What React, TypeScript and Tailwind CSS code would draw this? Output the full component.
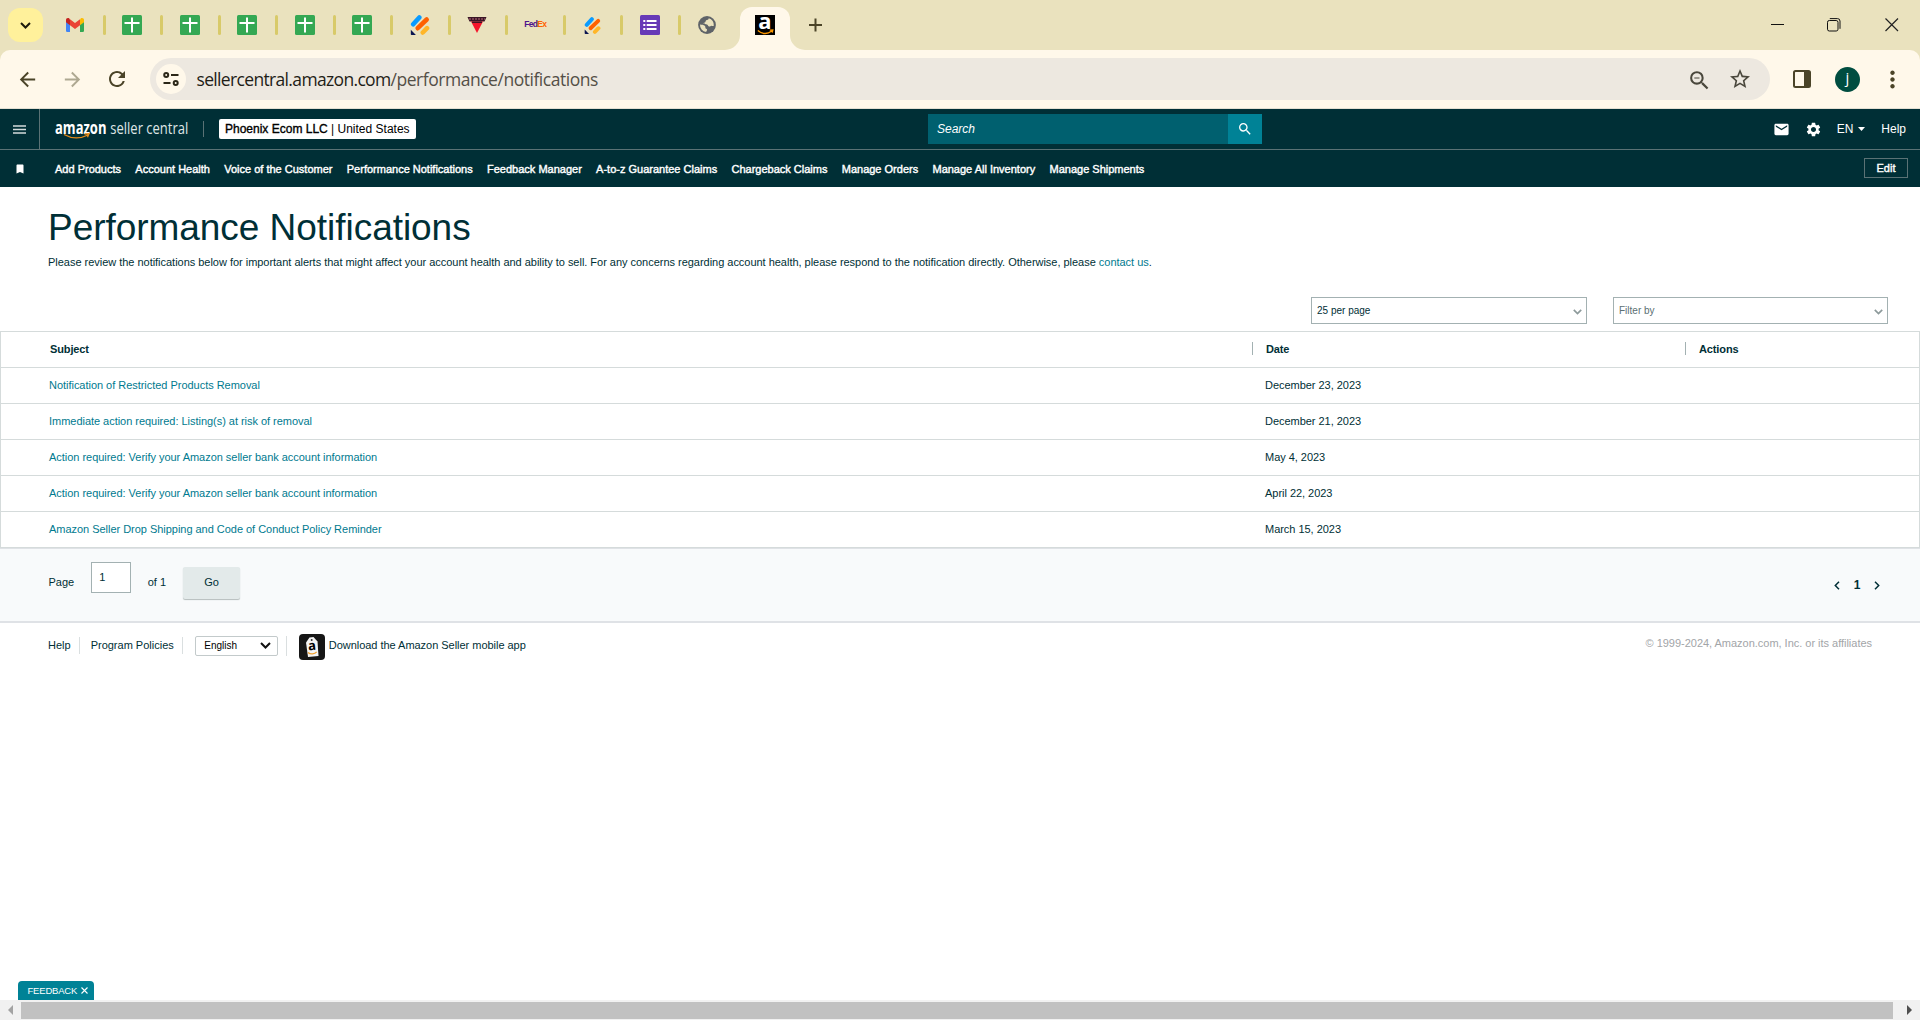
import React from "react";
import {
  MdArrowBack,
  MdArrowForward,
  MdBookmark,
  MdMoreVert,
  MdRefresh,
  MdSearch,
  MdSettings,
  MdStarBorder,
  MdZoomOut,
  MdMail,
} from "react-icons/md";

function GmailIcon() {
  return (
    <svg width="18" height="14" viewBox="0 0 18 14">
      <path d="M0 2.2V12.700a1.300 1.300 0 0 0 1.300 1.300H4V6z" fill="#4285f4" />
      <path d="M18 2.2V12.700a1.300 1.300 0 0 1-1.300 1.300H14V6z" fill="#34a853" />
      <path d="M0 2v2.300L4 7.300V1.500L3.300.6C2-.5 0 .3 0 2z" fill="#c5221f" />
      <path d="M18 2v2.300L14 7.300V1.500L14.700.6C16-.5 18 .3 18 2z" fill="#fbbc04" />
      <path d="M4 1.300L9 5l5-3.700v6L9 11 4 7.300z" fill="#ea4335" />
    </svg>
  );
}

function SheetsIcon() {
  return (
    <svg width="20" height="20" viewBox="0 0 20 20">
      <rect width="20" height="20" rx="1.500" fill="#34a853" />
      <path d="M2.500 8h15M10 2.500v15" stroke="#fff" strokeWidth="2" />
    </svg>
  );
}

function JotformIcon({ size }: { size: number }) {
  return (
    <svg width={size} height={size} viewBox="0 0 20 20">
      <g strokeLinecap="round" strokeWidth="4.600">
        <path d="M3.200 9.300L9.300 2.500" stroke="#0a9bff" />
        <path d="M7.700 13.200L16.700 4.500" stroke="#ff6100" />
        <path d="M12.800 17.500L17 13.200" stroke="#ffb629" />
      </g>
      <path d="M.8 14.800v4.400c0 .5.300.8.800.8h4.300z" fill="#0a1551" />
    </svg>
  );
}

function TriangleIcon() {
  return (
    <svg width="20" height="18" viewBox="0 0 20 18">
      <path d="M.5 1h19l-2 4.500h-15z" fill="#3a1626" />
      <path d="M2 3h16" stroke="#b9687a" strokeWidth="1" strokeDasharray="2 1" />
      <path d="M4 5.500h12L10 17z" fill="#f5152b" />
      <path d="M5 6.200h10" stroke="#3a1626" strokeWidth="1.500" />
    </svg>
  );
}

function FormsIcon() {
  return (
    <svg width="20" height="20" viewBox="0 0 20 20">
      <rect width="20" height="20" rx="1.500" fill="#673ab7" />
      <path d="M6.700 6h9.800M6.700 10h9.800M6.700 14h9.800" stroke="#fff" strokeWidth="2" />
      <path d="M3.300 6h2M3.300 10h2M3.300 14h2" stroke="#fff" strokeWidth="2" />
    </svg>
  );
}

function GlobeIcon() {
  return (
    <svg width="18" height="18" viewBox="0 0 18 18">
      <circle cx="9" cy="9" r="8.900" fill="#5f6368" />
      <path
        d="M10.800 2.200c-.2 1.500-1.600 1.500-2.600 2.100-.8.500-.3 1.700-1.300 2.300-.6.400-1.300.2-1.300.9 0 .8 2.300.4 3.400.9 1.300.6.900 1.900 2.200 2.100 1 .2 1.200-.8 2.200-.8.900 0 1.600.6 2.400 0A7 7 0 0 0 10.800 2.200z"
        fill="#eae2be"
      />
      <path
        d="M2 8.500c1.600.2 3.700.3 4.800 1.300 1 .9.200 1.800.9 2.600.6.600 1.600.5 1.400 1.600-.1.700-.7 1-.9 1.900A7 7 0 0 1 2 8.500z"
        fill="#eae2be"
      />
    </svg>
  );
}

function AmazonTabIcon() {
  return (
    <span className="relative flex h-5 w-5 justify-center bg-black">
      <span className="-mt-[5px] font-['Open_Sans',sans-serif] text-[22px] leading-[20px] font-bold text-white">a</span>
      <svg className="absolute bottom-0 left-[2px]" width="17" height="6" viewBox="0 0 17 6">
        <path d="M.8 1.500c4.500 3.700 9.800 3.700 14 .6M12.800 1.200l3-.2-.6 2.600" fill="none" stroke="#ff9900" strokeWidth="1.300" />
      </svg>
    </span>
  );
}

const tabs = [
  <GmailIcon />,
  <SheetsIcon />,
  <SheetsIcon />,
  <SheetsIcon />,
  <SheetsIcon />,
  <SheetsIcon />,
  <JotformIcon size={20} />,
  <TriangleIcon />,
  <span className="-mt-[2px] ml-px font-['Liberation_Sans',sans-serif] text-[8.500px] leading-none font-bold tracking-[-0.700px] text-[#4d148c]">
    Fed<span className="text-[#ff6200]">Ex</span>
  </span>,
  <JotformIcon size={17} />,
  <FormsIcon />,
  <GlobeIcon />,
];

function TabStrip() {
  return (
    <div className="flex h-[50px] bg-[#eae2be] pl-2">
      <button className="mt-2 flex h-[34px] w-[35px] items-center justify-center rounded-[12px] bg-[#fff19b]">
        <svg width="11" height="7" viewBox="0 0 11 7">
          <path d="M1 1l4.500 4.500L10 1" fill="none" stroke="#1d1b0c" strokeWidth="2" />
        </svg>
      </button>
      <div className="ml-[3px] flex">
        {tabs.map((icon, i) => (
          <div key={i} className="relative flex h-[50px] w-[57.500px] items-center justify-center">
            {icon}
            {i < 11 && <span className="absolute top-[15px] -right-[2px] h-[20px] w-[3px] rounded-full bg-[#d8ca69]" />}
          </div>
        ))}
      </div>
      <div className="relative mt-[7px] ml-[4px] flex h-[43px] w-[50px] justify-center rounded-t-[12px] bg-[#fff8ea] pt-2">
        <svg className="absolute bottom-0 -left-[15px]" width="15" height="15">
          <path d="M15 0v15H0A15 15 0 0 0 15 0z" fill="#fff8ea" />
        </svg>
        <AmazonTabIcon />
        <svg className="absolute -right-[15px] bottom-0" width="15" height="15">
          <path d="M0 0v15h15A15 15 0 0 1 0 0z" fill="#fff8ea" />
        </svg>
      </div>
      <svg className="mt-[18px] ml-[19px]" width="13" height="14">
        <path d="M6.500.5v13M0 7h13" stroke="#4b4428" strokeWidth="2" />
      </svg>
      <div className="mt-[18px] mr-[21px] ml-auto flex gap-[44px]">
        <svg width="13" height="14" className="translate-x-px">
          <path d="M0 6.500h13" stroke="#111" />
        </svg>
        <svg width="14" height="14" fill="none" stroke="#111">
          <rect x=".5" y="2.500" width="10.500" height="10.500" rx="1.800" />
          <path d="M2.800.6h7.700a2.500 2.500 0 0 1 2.500 2.500v7.700" />
        </svg>
        <svg width="14" height="14">
          <path d="M.5.5l12.500 12.500M13 .5L.5 13" stroke="#222" strokeWidth="1.200" />
        </svg>
      </div>
    </div>
  );
}

function Toolbar() {
  return (
    <div className="bg-[#eae2be]">
      <div className="flex h-[59px] items-center rounded-t-[10px] border-b border-[#e3dfd2] bg-[#fff8ea] pl-[16px] text-[#4b4428]">
        <MdArrowBack size={23} />
        <MdArrowForward size={23} className="ml-[22px] text-[#aea891]" />
        <MdRefresh size={24} className="ml-[21px] -mt-px" />
        <div className="ml-[21px] flex h-[42px] w-[1620px] items-center rounded-full bg-[#ede8e0] pl-[6px] font-['Open_Sans',sans-serif] text-[17.500px]">
          <span className="flex h-[30px] w-[30px] items-center justify-center rounded-full bg-[#fff8ea]">
            <svg width="16" height="14" viewBox="0 0 16 14" fill="none" stroke="#2b2718" strokeWidth="2">
              <circle cx="3.200" cy="3" r="2" />
              <path d="M8 3h7.500M.5 11h7" />
              <circle cx="12.700" cy="11" r="2" />
            </svg>
          </span>
          <span className="ml-[10.500px] tracking-[-0.660px] text-[#1f1d17]">sellercentral.amazon.com</span>
          <span className="tracking-[-0.470px] text-[#544f47]">/performance/notifications</span>
          <MdZoomOut size={25} className="mt-[2px] ml-auto text-[#4a473c]" />
          <MdStarBorder size={24} className="mr-[18px] ml-[16px] text-[#4a473c]" />
        </div>
        <svg className="ml-[23px]" width="18" height="18">
          <rect x="1" y="1" width="16" height="16" rx="1.500" fill="none" stroke="#4b4428" strokeWidth="2" />
          <rect x="11" y="1" width="6" height="16" fill="#4b4428" />
        </svg>
        <span className="ml-[24px] flex h-[25px] w-[25px] items-center justify-center rounded-full bg-[#004d40] pb-[3px] font-['Open_Sans',sans-serif] text-[15px] text-white">
          j
        </span>
        <MdMoreVert size={27} className="ml-[19px]" />
      </div>
    </div>
  );
}

const navLinks = [
  "Add Products",
  "Account Health",
  "Voice of the Customer",
  "Performance Notifications",
  "Feedback Manager",
  "A-to-z Guarantee Claims",
  "Chargeback Claims",
  "Manage Orders",
  "Manage All Inventory",
  "Manage Shipments",
];

function SiteHeader() {
  return (
    <header className="bg-[#002f36] text-white">
      <div className="flex h-[41px] items-center border-b border-[#5a7275]">
        <div className="flex h-[40px] w-[40px] items-center border-r border-[#5a7275] pl-[13px]">
          <svg width="13" height="9">
            <path d="M0 1h13M0 4.500h13M0 8h13" stroke="#d3dcdc" strokeWidth="1.700" />
          </svg>
        </div>
        <div className="relative ml-[15px] flex h-10 w-[134px] items-center">
          <span className="flex origin-left scale-x-[0.765] gap-[5px] pb-[4px] font-['Open_Sans',sans-serif] text-[17px] leading-none whitespace-nowrap">
            <span className="font-bold">amazon</span>
            <span className="text-[#dfe6e6]">seller central</span>
          </span>
          <svg className="absolute top-[24px] left-[8px]" width="28" height="7" viewBox="0 0 28 7">
            <path d="M1 1.500c8 4.500 16 4.500 24 .5M21.500 1l4.500-.3-1.500 3.600" fill="none" stroke="#e88b1a" strokeWidth="1.300" />
          </svg>
        </div>
        <span className="ml-[14px] h-4 w-px bg-[#5a7275]" />
        <div className="ml-[15px] flex h-5 w-[197px] items-center rounded-[2px] bg-white pl-[6px] text-[12px] whitespace-pre text-black">
          <span className="[-webkit-text-stroke:0.350px_black]">Phoenix Ecom LLC</span>
          <span> | United States</span>
        </div>
        <div className="ml-[512px] flex h-[30px]">
          <div className="flex w-[300px] items-center bg-[#00606f] pt-px pl-[9px] text-[12px] italic">Search</div>
          <div className="flex w-[34px] items-center justify-center bg-[#008296]">
            <MdSearch size={16} />
          </div>
        </div>
        <div className="mr-[14px] ml-auto flex items-center text-[12px]">
          <MdMail size={17} />
          <MdSettings size={17} className="ml-[15px]" />
          <span className="ml-[15px]">EN</span>
          <svg className="ml-[5px]" width="7" height="4">
            <path d="M0 0h7L3.500 4z" fill="#fff" />
          </svg>
          <span className="ml-[16px]">Help</span>
        </div>
      </div>
      <nav className="flex h-[37px] items-center text-[11px]">
        <MdBookmark size={12} className="ml-[14px]" />
        <div className="ml-[29px] flex gap-[14.300px] pt-[2px]">
          {navLinks.map((l) => (
            <span key={l} className="[-webkit-text-stroke:0.400px_white]">
              {l}
            </span>
          ))}
        </div>
        <span className="mr-[12px] mb-px ml-auto flex h-5 w-11 items-center justify-center border border-[#5a7275] [-webkit-text-stroke:0.400px_white]">
          Edit
        </span>
      </nav>
    </header>
  );
}

function Select({ label, className }: { label: string; className: string }) {
  return (
    <div className={"flex h-[27px] items-center justify-between border border-[#a3b1b2] bg-white pr-[4px] pl-[5px] text-[10px] " + className}>
      <span className="pb-px">{label}</span>
      <svg className="mt-[3px]" width="9" height="6">
        <path d="M.8.8l3.700 3.700L8.200.8" fill="none" stroke="#8d9a9b" strokeWidth="1.700" />
      </svg>
    </div>
  );
}

const rows = [
  ["Notification of Restricted Products Removal", "December 23, 2023"],
  ["Immediate action required: Listing(s) at risk of removal", "December 21, 2023"],
  ["Action required: Verify your Amazon seller bank account information", "May 4, 2023"],
  ["Action required: Verify your Amazon seller bank account information", "April 22, 2023"],
  ["Amazon Seller Drop Shipping and Code of Conduct Policy Reminder", "March 15, 2023"],
];

function NotificationsTable() {
  return (
    <div className="border-x border-t border-[#d5dbdb]">
      <div className="grid h-[36px] grid-cols-[1251px_433px_1fr] items-center border-b border-[#d5dbdb] font-bold">
        <span className="pl-[49px] tracking-[-0.120px]">Subject</span>
        <span className="relative pl-[14px] tracking-[-0.120px]">
          <span className="absolute -top-px left-0 h-[13px] w-px bg-[#a3b1b2]" />
          Date
        </span>
        <span className="relative pl-[14px] tracking-[-0.120px]">
          <span className="absolute -top-px left-0 h-[13px] w-px bg-[#a3b1b2]" />
          Actions
        </span>
      </div>
      {rows.map(([subject, date], i) => (
        <div key={i} className="grid h-[36px] grid-cols-[1251px_433px_1fr] items-center border-b border-[#d5dbdb]">
          <span className="pl-[48px] tracking-[-0.030px] text-[#007a8f]">{subject}</span>
          <span className="pl-[13px] tracking-[-0.030px]">{date}</span>
        </div>
      ))}
    </div>
  );
}

function Pager() {
  return (
    <div className="flex h-[75px] border-t border-b-2 border-[#dfe2e6] bg-[#f8fafb] pl-[48.500px]">
      <span className="mt-[27px]">Page</span>
      <span className="mt-[13px] ml-[17px] flex h-[31px] w-[40px] items-center border border-[#a3b1b2] bg-white pl-[7px]">1</span>
      <span className="mt-[27px] ml-[16.500px]">of 1</span>
      <span className="mt-[18px] ml-[17px] flex h-[32px] w-[57px] items-center justify-center rounded-[2px] bg-[#e3eaea] pb-px shadow-[0_1px_1px_#b4bcbc]">
        Go
      </span>
      <div className="mt-[30px] mr-[40.500px] ml-auto flex h-[13px] items-center font-bold">
        <svg width="6" height="9">
          <path d="M5 .8L1.300 4.500 5 8.200" fill="none" stroke="#002f36" strokeWidth="1.500" />
        </svg>
        <span className="ml-[14px] text-[12px]">1</span>
        <svg className="ml-[13px]" width="6" height="9">
          <path d="M1 .8l3.700 3.700L1 8.200" fill="none" stroke="#002f36" strokeWidth="1.500" />
        </svg>
      </div>
    </div>
  );
}

function Footer() {
  return (
    <footer className="flex h-[48px] items-center pb-[3px] pl-[48px]">
      <span>Help</span>
      <span className="ml-[8px] h-[17px] w-px bg-[#dadfe0]" />
      <span className="ml-[11px]">Program Policies</span>
      <span className="ml-[8px] h-[17px] w-px bg-[#dadfe0]" />
      <span className="ml-[12px] flex h-[20px] w-[83px] items-center justify-between rounded-[2px] border border-[#c3cacb] pr-[6px] pl-[8.500px] text-[10px] text-black">
        English
        <svg width="11" height="7">
          <path d="M1 1l4.500 4.500L10 1" fill="none" stroke="#111" strokeWidth="2" />
        </svg>
      </span>
      <span className="ml-[8px] h-[20px] w-px bg-[#dadfe0]" />
      <span className="relative top-px ml-[12px] flex h-[26px] w-[26px] items-center justify-center rounded-[4px] bg-[#161616]">
        <svg width="16" height="22" viewBox="0 0 16 22">
          <path d="M5.500 1.500L9.500 1l4 4.500 1 14.500-10.500 1L2 6.500z" fill="#f4f4f4" />
          <circle cx="7.700" cy="4" r="1" fill="#333" />
          <path d="M4 16.500c2.500 2 6.500 1.800 8.700-.6" fill="none" stroke="#f0a030" strokeWidth="1.400" />
        </svg>
        <span className="absolute top-[5px] left-[9px] -rotate-6 font-['Open_Sans',sans-serif] text-[13px] leading-[13px] font-bold text-black">
          a
        </span>
      </span>
      <span className="ml-[4px] tracking-[-0.030px]">Download the Amazon Seller mobile app</span>
      <span className="mr-[48px] mb-[5px] ml-auto tracking-[-0.020px] text-[#a2a5a8]">
        © 1999-2024, Amazon.com, Inc. or its affiliates
      </span>
    </footer>
  );
}

export default function App() {
  return (
    <div className="flex h-[1020px] w-[1920px] flex-col overflow-hidden bg-white font-['Liberation_Sans',Arial,sans-serif] text-[11px] leading-[13px] text-[#002f36]">
      <TabStrip />
      <Toolbar />
      <SiteHeader />
      <main className="flex flex-1 flex-col">
        <h1 className="mt-[20px] pl-[48px] text-[37px] leading-[42px] tracking-[-0.040px]">Performance Notifications</h1>
        <p className="mt-[7px] pl-[48px] tracking-[-0.024px] whitespace-nowrap">
          Please review the notifications below for important alerts that might affect your account health and ability to
          sell. For any concerns regarding account health, please respond to the notification directly. Otherwise, please{" "}
          <a className="text-[#007a8f]">contact us</a>.
        </p>
        <div className="mt-[28px] mb-[7px] flex justify-end gap-[26px] pr-[32px]">
          <Select label="25 per page" className="w-[276px] text-[#002f36]" />
          <Select label="Filter by" className="w-[275px] text-[#5b6f72]" />
        </div>
        <NotificationsTable />
        <Pager />
        <Footer />
        <div className="mt-auto ml-[18px] flex h-[19px] w-[76px] items-center rounded-t-[4px] bg-[#008296] pl-[9.500px] text-[9.500px] text-white">
          <span className="tracking-[-0.200px]">FEEDBACK</span>
          <svg className="ml-[4px]" width="7" height="7">
            <path d="M.5.5l6 6M6.500.5l-6 6" stroke="#fff" strokeWidth="1.100" />
          </svg>
        </div>
      </main>
      <div className="flex h-[20px] items-center bg-[#f1f1f1]">
        <svg className="ml-[8px]" width="5" height="10">
          <path d="M5 0v10L0 5z" fill="#a3a3a3" />
        </svg>
        <span className="ml-[8px] h-[17px] w-[1872px] bg-[#c1c1c1]" />
        <svg className="ml-[14px]" width="5" height="10">
          <path d="M0 0v10l5-5z" fill="#505050" />
        </svg>
      </div>
    </div>
  );
}
